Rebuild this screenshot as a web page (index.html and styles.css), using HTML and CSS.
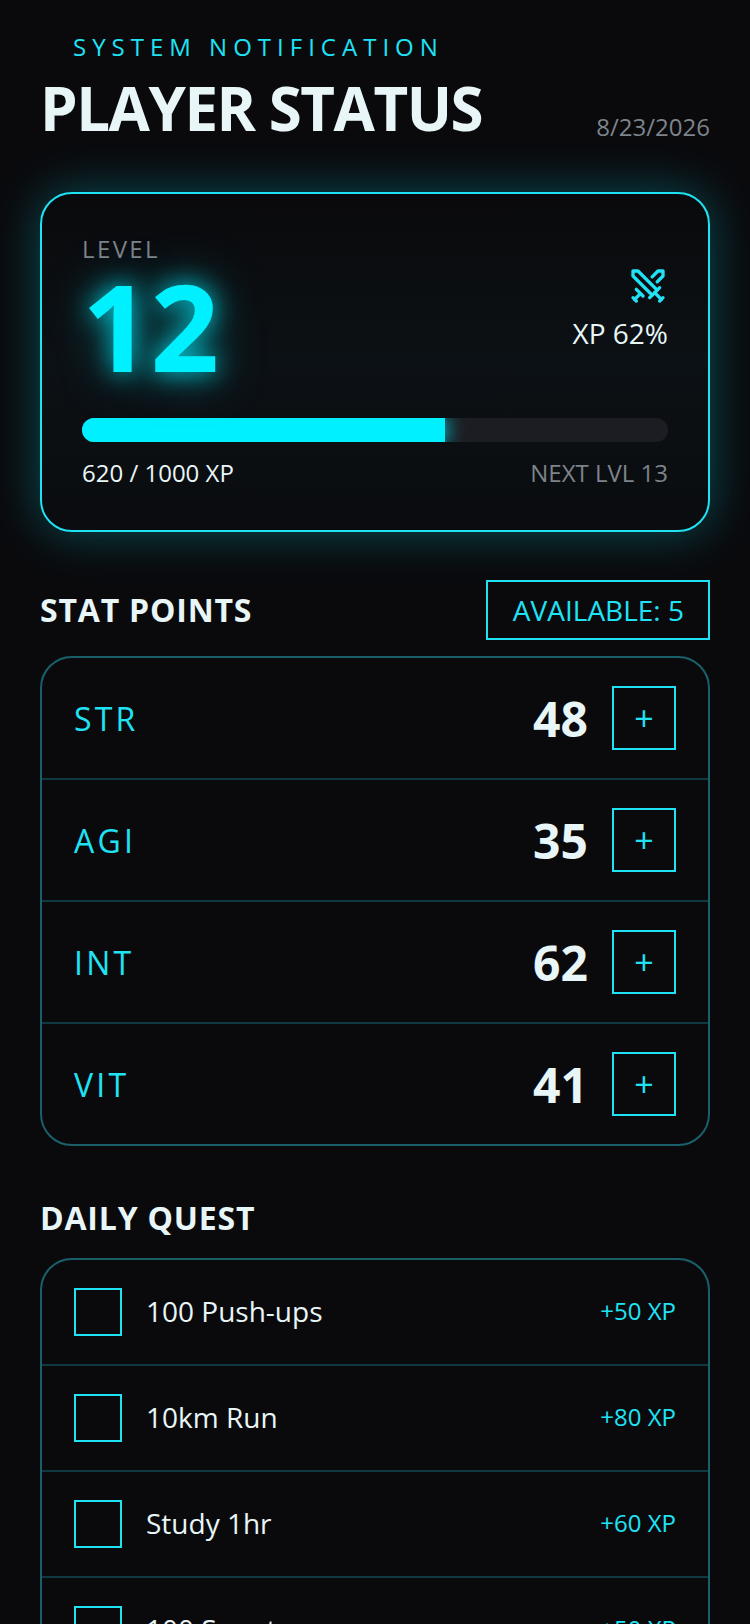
FILE: index.html
```html
<!DOCTYPE html>
<html lang="en">
<head>
  <meta charset="UTF-8" />
  <meta name="viewport" content="width=device-width, initial-scale=1.0"/>
  <title>Player Status</title>
  <link rel="stylesheet" href="styles.css">
</head>

<body>
  <header>
    <div class="eyebrow">SYSTEM NOTIFICATION</div>
    <div class="title-row">
      <h1>PLAYER STATUS</h1>
      <span class="date">8/23/2026</span>
    </div>
  </header>

  <section class="level-card">
    <div class="level-top">
      <div>
        <div class="level-label">LEVEL</div>
        <div class="level-num">12</div>
      </div>
      <div class="level-side">
        <svg class="swords" viewBox="0 0 24 24" fill="none" stroke="currentColor" stroke-width="2" stroke-linecap="round" stroke-linejoin="round">
          <path d="M14.5 17.5 3 6V3h3l11.5 11.5"/>
          <path d="M13 19l6-6"/>
          <path d="M16 16l4 4"/>
          <path d="M19 21l2-2"/>
          <path d="M14.5 6.5 18 3h3v3l-3.5 3.5"/>
          <path d="M5 14l4 4"/>
          <path d="M7 17l-3 3"/>
          <path d="M3 19l2 2"/>
        </svg>
        <div class="xp-pct">XP 62%</div>
      </div>
    </div>
    <div class="bar"><div class="bar-fill" style="width: 62%"></div></div>
    <div class="bar-labels">
      <span>620 / 1000 XP</span>
      <span class="next">NEXT LVL 13</span>
    </div>
  </section>

  <section class="stats">
    <div class="section-head">
      <h2>STAT POINTS</h2>
      <div class="available">AVAILABLE: 5</div>
    </div>
    <div class="panel">
      <div class="stat-row">
        <span class="stat-name">STR</span>
        <span class="stat-val">48</span>
        <button class="plus">+</button>
      </div>
      <div class="stat-row">
        <span class="stat-name">AGI</span>
        <span class="stat-val">35</span>
        <button class="plus">+</button>
      </div>
      <div class="stat-row">
        <span class="stat-name">INT</span>
        <span class="stat-val">62</span>
        <button class="plus">+</button>
      </div>
      <div class="stat-row">
        <span class="stat-name">VIT</span>
        <span class="stat-val">41</span>
        <button class="plus">+</button>
      </div>
    </div>
  </section>

  <section class="quests">
    <h2>DAILY QUEST</h2>
    <div class="panel">
      <div class="quest-row">
        <span class="check"></span>
        <span class="quest-name">100 Push-ups</span>
        <span class="quest-xp">+50 XP</span>
      </div>
      <div class="quest-row">
        <span class="check"></span>
        <span class="quest-name">10km Run</span>
        <span class="quest-xp">+80 XP</span>
      </div>
      <div class="quest-row">
        <span class="check"></span>
        <span class="quest-name">Study 1hr</span>
        <span class="quest-xp">+60 XP</span>
      </div>
      <div class="quest-row">
        <span class="check"></span>
        <span class="quest-name">100 Squats</span>
        <span class="quest-xp">+50 XP</span>
      </div>
    </div>
  </section>
</body>
</html>
```

FILE: styles.css
```css
:root {
  --background: #0a0a0d;
  --cyan: #00f0ff;
  --line-cyan: #1fe3f5;
  --text: #e8f6f8;
  --gray: #7d838a;
}

* {
  box-sizing: border-box;
}

html, body {
  height: 1624px;
  overflow: hidden;
}

body {
  margin: 0;
  padding: 31px 40px 0;
  background-color: var(--background);
  color: var(--text);
  font-family: "Open Sans", sans-serif;
}

.eyebrow {
  padding-left: 33px;
  color: var(--line-cyan);
  font-size: 24px;
  line-height: 32px;
  letter-spacing: 6px;
}

.title-row {
  display: flex;
  justify-content: space-between;
  align-items: flex-end;
  margin-top: 5px;
}

h1 {
  margin: 0;
  font-size: 60px;
  line-height: 80px;
  font-weight: 700;
  letter-spacing: -1.5px;
}

.date {
  color: var(--gray);
  font-size: 24px;
  line-height: 32px;
  margin-bottom: 5px;
}

.level-card {
  margin-top: 44px;
  height: 340px;
  padding: 39px 40px 40px;
  background: linear-gradient(#0a0a0c, #0c1115 50%, #0a0c0f);
  border: 2px solid var(--line-cyan);
  border-radius: 32px;
  box-shadow: 0 0 48px rgba(0, 240, 255, 0.3);
}

.level-top {
  display: flex;
  justify-content: space-between;
  align-items: flex-end;
}

.level-label {
  color: var(--gray);
  font-size: 24px;
  line-height: 32px;
  letter-spacing: 2.4px;
}

.level-num {
  margin-top: 3px;
  color: var(--cyan);
  font-size: 120px;
  line-height: 116px;
  font-weight: 700;
  text-shadow: 0 0 24px rgba(0, 240, 255, 0.8), 0 0 48px rgba(0, 240, 255, 0.5);
}

.level-side {
  display: flex;
  flex-direction: column;
  align-items: flex-end;
  padding-bottom: 32px;
}

.swords {
  width: 40px;
  height: 40px;
  color: var(--line-cyan);
}

.xp-pct {
  margin-top: 8px;
  font-size: 28px;
  line-height: 38px;
}

.bar {
  margin-top: 34px;
  height: 24px;
  background: #1c1d22;
  border-radius: 12px;
  overflow: hidden;
}

.bar-fill {
  height: 100%;
  background: var(--cyan);
  box-shadow: 0 0 20px var(--cyan);
}

.bar-labels {
  display: flex;
  justify-content: space-between;
  margin-top: 15px;
  font-size: 24px;
  line-height: 32px;
}

.next {
  color: var(--gray);
}

.stats {
  margin-top: 48px;
}

.section-head {
  display: flex;
  justify-content: space-between;
  align-items: center;
}

h2 {
  margin: 0;
  font-size: 32px;
  line-height: 40px;
  font-weight: 700;
  letter-spacing: 0.8px;
}

.available {
  height: 60px;
  padding: 0 24px 0 25px;
  display: flex;
  align-items: center;
  border: 2px solid var(--line-cyan);
  color: var(--line-cyan);
  font-size: 28px;
}

.panel {
  margin-top: 16px;
  border: 2px solid #1a606b;
  border-radius: 32px;
  overflow: hidden;
}

.stat-row {
  display: flex;
  align-items: center;
  height: 122px;
  padding: 0 32px;
  border-bottom: 2px solid #0f3840;
}

.stat-row:last-child {
  height: 120px;
  border-bottom: none;
}

.stat-name {
  flex: 1;
  color: var(--line-cyan);
  font-size: 32px;
  letter-spacing: 3.2px;
}

.stat-val {
  font-size: 48px;
  font-weight: 700;
  margin-right: 24px;
}

.plus {
  width: 64px;
  height: 64px;
  padding: 0;
  background: none;
  border: 2px solid var(--line-cyan);
  color: var(--line-cyan);
  font-family: inherit;
  font-size: 34px;
}

.quests {
  margin-top: 52px;
}

.quests .panel {
  margin-top: 20px;
}

.quest-row {
  display: flex;
  align-items: center;
  height: 106px;
  padding: 0 32px;
  border-bottom: 2px solid #0f3840;
}

.check {
  width: 48px;
  height: 48px;
  border: 2px solid var(--line-cyan);
  margin-right: 24px;
}

.quest-name {
  flex: 1;
  margin-bottom: 2px;
  font-size: 28px;
}

.quest-xp {
  margin-bottom: 4px;
  color: var(--line-cyan);
  font-size: 24px;
}
```
